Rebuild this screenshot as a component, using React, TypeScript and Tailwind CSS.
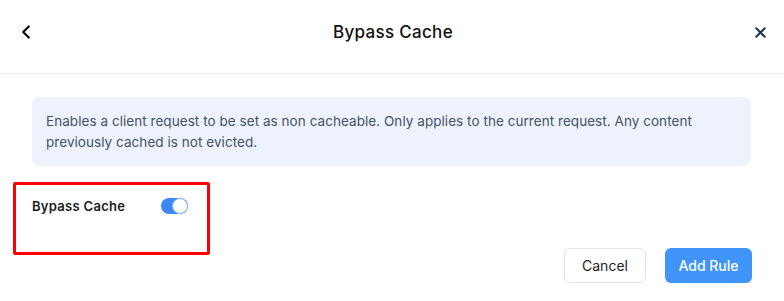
import { ChevronLeft, X } from 'lucide-react'

export default function App() {
  return (
    <div className="w-[784px] h-[301px] bg-white text-[#1c1c1c] [font-family:Inter,'Noto_Sans',sans-serif] overflow-hidden">
      {/* Header */}
      <div className="h-[74px] flex items-start justify-between px-[14px] pt-[20px] border-b border-[#ededed]">
        <button className="w-[24px] h-[24px] flex items-center justify-center text-[#111]">
          <ChevronLeft className="w-[22px] h-[22px]" strokeWidth={2.6} />
        </button>
        <h1 className="text-[17px] font-medium tracking-[0.3px] text-[#111] leading-[24px]">Bypass Cache</h1>
        <button className="w-[24px] h-[24px] flex items-center justify-center text-[#17384f] mr-[-2px]">
          <X className="w-[17px] h-[17px]" strokeWidth={2.8} />
        </button>
      </div>

      {/* Info */}
      <div className="px-[32px] pt-[23px]">
        <div className="w-[719px] h-[69px] rounded-[8px] bg-[#eef2fc] px-[14px] pt-[14px] text-[13.5px] tracking-[0.05px] leading-[21px] text-[#3f5566]">
          Enables a client request to be set as non cacheable. Only applies to the current request. Any content
          <br />
          previously cached is not evicted.
        </div>
      </div>

      {/* Toggle row + actions */}
      <div className="flex items-start justify-between pl-[13px] pr-[32px] pt-[16px]">
        <div className="w-[197px] h-[73px] border-[3px] border-[#ff0000] rounded-[2px] flex items-start pl-[16px] pt-[13px] gap-[36px]">
          <span className="text-[13px] font-semibold tracking-[0.3px] text-[#1c1c1c] leading-[18px] mt-[-1px]">Bypass Cache</span>
          <span className="relative w-[27px] h-[16px] rounded-full bg-[#3d87f5]">
            <span className="absolute right-0 top-0 w-[16px] h-[16px] rounded-full bg-white border border-[#8fb8f7]" />
          </span>
        </div>
        <div className="flex gap-[19px] mt-[66px]">
          <button className="w-[82px] h-[35px] rounded-[6px] border border-[#dfe3e6] bg-white text-[14px] text-[#1c1c1c]">
            Cancel
          </button>
          <button className="w-[87px] h-[35px] rounded-[6px] bg-[#4194f9] text-[14px] font-medium text-white">
            Add Rule
          </button>
        </div>
      </div>
    </div>
  )
}
